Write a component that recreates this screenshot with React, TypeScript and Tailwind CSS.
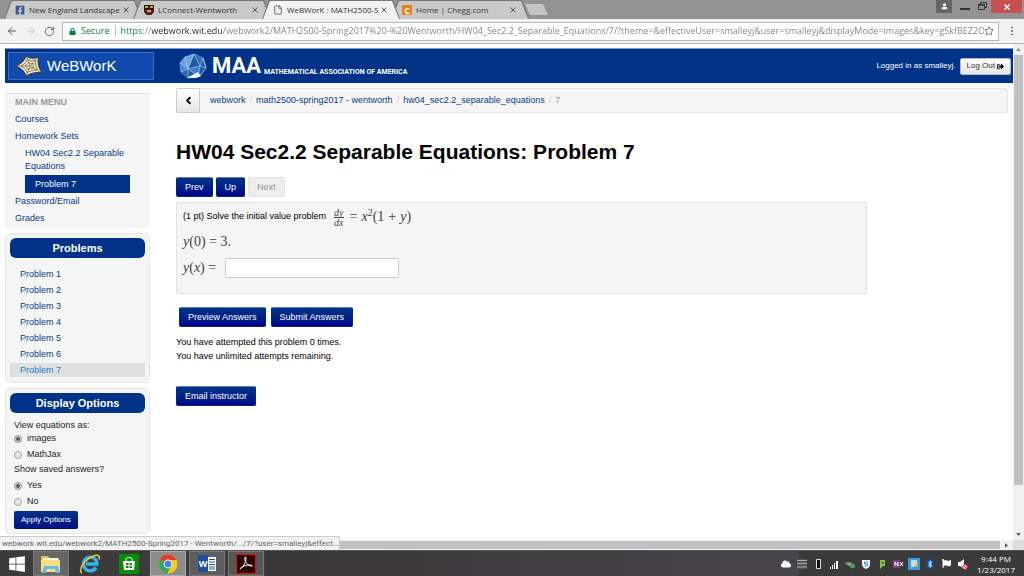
import type { ReactNode } from 'react'
import { ArrowLeft, ArrowRight, RotateCw, Star, MoreVertical, File, ChevronLeft } from 'lucide-react'
import { FaFacebookSquare, FaLock, FaSignOutAlt, FaWindows, FaBluetoothB, FaFlag, FaCloud } from 'react-icons/fa'

const PAGE_URL =
  'https://webwork.wit.edu/webwork2/MATH2500-Spring2017%20-%20Wentworth/HW04_Sec2.2_Separable_Equations/7/?theme=&effectiveUser=smalleyj&user=smalleyj&displayMode=images&key=gSkfBEZ2O'

const problems = [1, 2, 3, 4, 5, 6, 7]
const currentProblem = 7

// ---------- Browser chrome ----------

function CrestIcon() {
  return (
    <svg viewBox="0 0 10 10" className="size-[10px] shrink-0">
      <rect width="10" height="10" fill="#2a1517" />
      <path d="M0 5h10L5 10z" fill="#7d1f28" />
      <path d="M1 1h3v2H1zM6 1h3v2H6zM3 5h4v2H3z" fill="#d5a43a" />
      <path d="M0 10V7l3 3zM10 10V7l-3 3z" fill="#c8c8c8" />
    </svg>
  )
}

function CheggIcon() {
  return (
    <span className="flex size-[10px] shrink-0 items-center justify-center rounded-[1px] bg-[#e8801d] text-[9px] leading-none font-bold text-white">
      C
    </span>
  )
}

interface BrowserTabProps {
  icon: ReactNode
  title: string
  active?: boolean
}

function BrowserTab({ icon, title, active }: BrowserTabProps) {
  return (
    <div
      className={`-ml-[9px] h-full w-[138px] bg-[#777] px-px pt-px [clip-path:polygon(0_100%,7px_0,131px_0,100%_100%)] ${active ? 'relative z-10' : ''}`}
    >
      <div
        className={`flex h-full items-center gap-1 pr-3 pl-[10px] text-[8px] text-[#333] [clip-path:polygon(0_100%,7px_0,129px_0,100%_100%)] ${active ? 'bg-[#f2f2f2]' : 'bg-[#c9c9c9]'}`}
      >
        {icon}
        <span className="min-w-0 flex-1 whitespace-nowrap">{title}</span>
        <button type="button" aria-label="Close tab" className="shrink-0">
          <svg viewBox="0 0 6 6" className="size-[6px]" stroke="#555">
            <path d="M.5.5l5 5M5.5.5l-5 5" />
          </svg>
        </button>
      </div>
    </div>
  )
}

function WindowControls() {
  return (
    <div className="ml-auto flex items-start gap-2">
      <button type="button" aria-label="Profile" className="flex h-[13px] w-4 items-center justify-center bg-[#666]">
        <svg viewBox="0 0 8 8" className="size-[7px]" fill="#fff">
          <circle cx="4" cy="2" r="1.8" />
          <path d="M1 5c2-1 4-1 6 0v2H1z" />
        </svg>
      </button>
      <button type="button" aria-label="Minimize" className="flex h-[10px] w-[10px] items-end">
        <span className="h-[2px] w-full bg-[#333]" />
      </button>
      <button type="button" aria-label="Restore" className="mt-[2px]">
        <svg viewBox="0 0 9 8" className="h-2 w-[9px]" fill="none" stroke="#333">
          <path d="M2.5 2V.5h6v5H7" />
          <path d="M.5 2.5h6v5h-6z" />
          <path d="M.5 3h6" strokeWidth="1.5" />
        </svg>
      </button>
      <button type="button" aria-label="Close" className="-ml-1 flex h-[13px] w-[31px] items-center justify-center bg-[#c75050]">
        <svg viewBox="0 0 6 6" className="size-[6px]" stroke="#fff" strokeWidth="1.4">
          <path d="M.5.5l5 5M5.5.5l-5 5" />
        </svg>
      </button>
    </div>
  )
}

function TabStrip() {
  return (
    <div className="flex h-[19px] shrink-0 bg-[#939393] pr-0.5 pl-[13px]">
      <BrowserTab icon={<FaFacebookSquare className="size-[10px] shrink-0 text-[#3b5998]" />} title="New England Landscape" />
      <BrowserTab icon={<CrestIcon />} title="LConnect-Wentworth" />
      <BrowserTab icon={<File className="size-[10px] shrink-0 text-[#555]" />} title="WeBWorK : MATH2500-S" active />
      <BrowserTab icon={<CheggIcon />} title="Home | Chegg.com" />
      <button
        type="button"
        aria-label="New tab"
        className="mt-1 -ml-1 h-[11px] w-[23px] bg-[#c4c4c4] [clip-path:polygon(0_0,18px_0,100%_100%,5px_100%)]"
      />
      <WindowControls />
    </div>
  )
}

function AddressBar() {
  return (
    <div className="flex h-[25px] shrink-0 items-center gap-[7px] border-b border-[#b6b6b6] bg-[#f2f2f2] px-[6px] text-[#5a5a5a]">
      <button type="button" aria-label="Back">
        <ArrowLeft className="size-3" />
      </button>
      <button type="button" aria-label="Forward" className="text-[#c8c8c8]">
        <ArrowRight className="size-3" />
      </button>
      <button type="button" aria-label="Reload">
        <RotateCw className="size-[11px]" />
      </button>
      <div className="flex h-[19px] min-w-0 flex-1 items-center border border-[#b8b8b8] bg-white pr-1 pl-[6px]">
        <FaLock className="size-[7px] shrink-0 text-[#0b8043]" />
        <label htmlFor="address" className="ml-[5px] shrink-0 text-[9px] text-[#0b8043]">
          Secure
        </label>
        <span className="mx-[5px] h-3 w-px shrink-0 bg-[#bbb]" />
        <input
          id="address"
          type="text"
          defaultValue={PAGE_URL}
          className="min-w-0 flex-1 bg-linear-[90deg,#0b8043_22px,#808080_22px,#808080_31px,#222_31px,#222_102px,#808080_102px] bg-clip-text text-[9px] text-transparent outline-none"
        />
        <button type="button" aria-label="Bookmark">
          <Star className="size-[10px]" />
        </button>
      </div>
      <button type="button" aria-label="Menu">
        <MoreVertical className="size-3" />
      </button>
    </div>
  )
}

// ---------- WeBWorK header ----------

// five-pointed spider web
function WebworkLogo() {
  return (
    <svg viewBox="0 0 28 22" className="h-[22px] w-7" strokeLinejoin="round" fill="none">
      <path d="M1 11Q9 8 11 1Q16 5 24 2Q21 9 27 18Q19 16 11 21Q9 14 1 11z" fill="#f2e8c4" stroke="#2c2a22" strokeWidth=".9" />
      <path d="M6 11Q11 9 12 4.500Q16 7 20.500 5Q19.500 10 22.500 15Q17 14.500 12 17.500Q10.500 13 6 11z" stroke="#5b5643" strokeWidth=".7" />
      <path d="M10 11Q12.500 10 13.500 7.500Q15.500 9 18 8Q17.500 10.500 19 13Q16 12.500 13 14.500Q12.500 12 10 11z" stroke="#5b5643" strokeWidth=".6" />
      <path d="M1 11h14L11 1M15 11l9-9M15 11l12 7M15 11l-4 10" stroke="#5b5643" strokeWidth=".6" />
    </svg>
  )
}

// faceted icosahedron
function MaaLogo() {
  return (
    <svg viewBox="0 0 28 26" className="h-[26px] w-7" strokeLinejoin="round">
      <path d="M15 1l9 4 3 10-6 8-12 2-7-6-1-9 5-6z" fill="#1f5bab" stroke="#9cc3ea" strokeWidth=".8" />
      <path d="M15 1L6 4 1 10l8 6z" fill="#6ea3dc" />
      <path d="M15 1l9 4-3 8z" fill="#2f6fbd" />
      <path d="M9 16l12-3-2 10z" fill="#3d7cc6" />
      <path d="M1 10l8 6-7 3z" fill="#4a86ca" />
      <path d="M9 16L2 19l7 6z" fill="#2a66b3" />
      <path d="M8 25l11-6 3 4-5 2z" fill="#fff" />
      <path d="M15 1L9 16l12-3zM21 13l3-8 3 10zM9 16l10 7 2-10M6 4l3 12-8-6M9 16l-7 3M9 16v9" fill="none" stroke="#b9d6f2" strokeWidth=".6" />
    </svg>
  )
}

function SiteHeader() {
  return (
    <header className="flex h-[35px] items-center border-t border-[#7f9cc9] bg-[#003287] pr-[2px] pl-[3px] text-white">
      <a href="#webwork" className="flex h-7 w-[146px] items-center gap-1 border border-[#3f6cc0] bg-[#104aad] pl-[6px] text-[15px]">
        <WebworkLogo />
        WeBWorK
      </a>
      <a href="#maa" className="ml-[25px] flex items-center font-['Roboto',sans-serif] font-bold">
        <MaaLogo />
        <span className="ml-[5px] text-[22px] leading-7">MAA</span>
        <span className="mt-3 ml-[3px] text-[7px] leading-3">MATHEMATICAL ASSOCIATION OF AMERICA</span>
      </a>
      <div className="ml-auto flex items-center gap-1">
        <span className="text-[8px]">Logged in as smalleyj.</span>
        <button
          type="button"
          className="flex h-[17px] items-center gap-0.5 rounded-[2px] border border-[#bbb] bg-linear-to-b from-white to-[#e6e6e6] px-[6px] text-[8px] text-[#333]"
        >
          Log Out
          <FaSignOutAlt className="size-[7px] text-black" />
        </button>
      </div>
    </header>
  )
}

// ---------- Sidebar ----------

function MainMenu() {
  return (
    <nav className="border-t border-[#e3e3e3] bg-[#f5f5f5] pb-px pl-[10px] leading-[17px] text-[#0a3a86]">
      <h2 className="font-bold text-[#999]">MAIN MENU</h2>
      <ul>
        <li><a href="#courses">Courses</a></li>
        <li><a href="#sets">Homework Sets</a></li>
        <li className="pr-5 pl-[10px]">
          <a href="#hw04" className="block py-[2px] leading-[13px]">HW04 Sec2.2 Separable Equations</a>
          <a href="#p7" className="block bg-[#003287] pl-[10px] leading-[18px] text-white">Problem 7</a>
        </li>
        <li><a href="#password">Password/Email</a></li>
        <li><a href="#grades">Grades</a></li>
      </ul>
    </nav>
  )
}

function SidePanel({ title, children }: { title: string; children: ReactNode }) {
  return (
    <section className="mt-[5px] rounded-[5px] border border-[#e6e6e6] bg-[#f5f5f5] p-1">
      <h2 className="rounded-[6px] bg-[#003287] text-center text-[11px] leading-5 font-bold text-white">{title}</h2>
      {children}
    </section>
  )
}

interface RadioRowProps {
  name: string
  label: string
  checked?: boolean
}

function RadioRow({ name, label, checked }: RadioRowProps) {
  return (
    <label className="flex h-4 items-center gap-[5px]">
      <input
        type="radio"
        name={name}
        defaultChecked={checked}
        className="size-2 appearance-none rounded-full border border-[#a5a5a5] bg-[#e6e6e6] checked:bg-[#555] checked:shadow-[inset_0_0_0_1px_#e6e6e6]"
      />
      {label}
    </label>
  )
}

function Sidebar() {
  return (
    <aside className="mt-[10px] w-[145px] shrink-0">
      <MainMenu />
      <SidePanel title="Problems">
        <ul className="pt-2">
          {problems.map((n) => (
            <li key={n} className="flex h-4 items-center">
              <a
                href={`#problem-${n}`}
                className={`w-full pl-[10px] leading-[14px] ${n === currentProblem ? 'bg-[#e0e0e0] text-[#1a83c9]' : 'text-[#0a3a86]'}`}
              >
                Problem {n}
              </a>
            </li>
          ))}
        </ul>
      </SidePanel>
      <SidePanel title="Display Options">
        <form className="px-1 pt-[6px] text-[#222]">
          <fieldset>
            <legend className="leading-3">View equations as:</legend>
            <RadioRow name="mode" label="images" checked />
            <RadioRow name="mode" label="MathJax" />
          </fieldset>
          <fieldset className="pt-[3px]">
            <legend className="leading-3">Show saved answers?</legend>
            <RadioRow name="saved" label="Yes" checked />
            <RadioRow name="saved" label="No" />
          </fieldset>
          <button type="button" className="mt-px rounded-[2px] bg-linear-to-b from-[#003287] to-[#000f85] px-[7px] text-[8px] leading-[18px] text-white">
            Apply Options
          </button>
        </form>
      </SidePanel>
    </aside>
  )
}

// ---------- Problem ----------

function PrimaryButton({ children }: { children: ReactNode }) {
  return (
    <button
      type="button"
      className="rounded-[2px] border border-[#002a80] border-t-[#5a7bb5] bg-linear-to-b from-[#003287] to-[#000088] px-2 leading-[18px] text-white"
    >
      {children}
    </button>
  )
}

function Breadcrumb() {
  return (
    <nav className="mt-[5px] flex h-[25px] items-center gap-[4px] rounded-[2px] border border-[#e6e6e6] bg-[#f5f5f5] text-[#0a3a86]">
      <button
        type="button"
        aria-label="Back"
        className="-ml-px flex h-[25px] w-6 items-center justify-center rounded-[2px] border border-[#ccc] bg-linear-to-b from-white to-[#e6e6e6] text-black"
      >
        <ChevronLeft className="size-[11px]" strokeWidth={4} />
      </button>
      <a href="#webwork" className="ml-[6px]">webwork</a>
      <span className="text-[#ccc]">/</span>
      <a href="#course">math2500-spring2017 - wentworth</a>
      <span className="text-[#ccc]">/</span>
      <a href="#set">hw04_sec2.2_separable_equations</a>
      <span className="text-[#ccc]">/</span>
      <span className="text-[#999]">7</span>
    </nav>
  )
}

function Formula({ className, children }: { className?: string; children: ReactNode }) {
  return <span className={`font-['Liberation_Serif',serif] text-[14px] leading-5 text-[#444] ${className ?? ''}`}>{children}</span>
}

function ProblemBody() {
  return (
    <div className="mt-[5px] h-[92px] w-[83%] rounded-[2px] border border-[#e3e3e3] bg-[#f5f5f5] px-[6px] pt-[1px]">
      <div className="flex h-[26px] items-center">
        (1 pt) Solve the initial value problem
        <span className="ml-2 flex flex-col text-center font-['Liberation_Serif',serif] text-[10px] leading-[9px] text-[#444] italic">
          <span className="border-b border-[#444]">dy</span>
          <span>dx</span>
        </span>
        <Formula className="ml-[6px] flex items-center gap-1">
          <span>=</span>
          <span><i>x</i><sup className="text-[10px]">2</sup>(1</span>
          <span>+</span>
          <span><i>y</i>)</span>
        </Formula>
      </div>
      <div className="flex h-6 items-center">
        <Formula><i>y</i>(0) = 3.</Formula>
      </div>
      <div className="flex h-[27px] items-center gap-[9px]">
        <label htmlFor="answer">
          <Formula><i>y</i>(<i>x</i>) =</Formula>
        </label>
        <input id="answer" type="text" className="h-5 w-[174px] rounded-[2px] border border-[#ccc] bg-white px-1 outline-none" />
      </div>
    </div>
  )
}

function ProblemPage() {
  return (
    <main className="min-w-0 flex-1 pr-[5px]">
      <Breadcrumb />
      <h1 className="mt-[25px] text-[21px] leading-7 font-bold">HW04 Sec2.2 Separable Equations: Problem 7</h1>
      <div className="mt-[11px] flex gap-[3px]">
        <PrimaryButton>Prev</PrimaryButton>
        <PrimaryButton>Up</PrimaryButton>
        <button type="button" disabled className="rounded-[2px] border border-[#e3e3e3] bg-[#eee] px-2 leading-[18px] text-[#999]">
          Next
        </button>
      </div>
      <ProblemBody />
      <div className="mt-[13px] flex gap-[5px] pl-[3px]">
        <PrimaryButton>Preview Answers</PrimaryButton>
        <PrimaryButton>Submit Answers</PrimaryButton>
      </div>
      <p className="mt-2 mb-[23px] leading-[14px]">
        You have attempted this problem 0 times.
        <br />
        You have unlimited attempts remaining.
      </p>
      <PrimaryButton>Email instructor</PrimaryButton>
    </main>
  )
}

// ---------- Scrollbars and status bubble ----------

function VerticalScrollbar() {
  return (
    <div className="flex w-[11px] shrink-0 flex-col items-center bg-[#f1f1f1] py-1">
      <svg viewBox="0 0 6 4" className="h-[3px] w-[5px]" fill="#888"><path d="M0 4l3-4 3 4z" /></svg>
      <div className="mt-1 mb-12 w-[9px] flex-1 bg-[#c1c1c1]" />
      <svg viewBox="0 0 6 4" className="h-[3px] w-[5px]" fill="#555"><path d="M0 0l3 4 3-4z" /></svg>
    </div>
  )
}

function HorizontalScrollbar() {
  return (
    <div className="relative flex h-[10px] shrink-0 items-center bg-[#f1f1f1] pl-3">
      <div className="h-2 flex-1 bg-[#c1c1c1]" />
      <svg viewBox="0 0 4 6" className="mx-[5px] h-[5px] w-[3px]" fill="#555"><path d="M0 0l4 3-4 3z" /></svg>
      <div className="h-full w-[11px] bg-[#dcdcdc]" />
      <div className="absolute bottom-0 left-0 h-[14px] w-[340px] rounded-tr-[2px] border-t border-r border-[#ccc] bg-[#f2f2f2] pl-[2px] font-['Roboto',sans-serif] text-[8px] leading-[14px] whitespace-nowrap text-[#666]">
        webwork.wit.edu/webwork2/MATH2500-Spring2017 - Wentworth/.../7/?user=smalleyj&amp;effect...
      </div>
    </div>
  )
}

// ---------- Windows taskbar ----------

function FolderIcon() {
  return (
    <svg viewBox="0 0 22 20" className="h-5 w-[22px]">
      <path d="M1 2h7l2 2h9v14H1z" fill="#e3bd5b" />
      <path d="M3 4h15v4H3z" fill="#fdf6d6" />
      <path d="M1 6h19v12H1z" fill="#f6dd88" />
      <path d="M4 12h14l2 7h-4l-1-4H7l-1 4H2z" fill="#6cb7e0" />
    </svg>
  )
}

function ExplorerIcon() {
  return (
    <svg viewBox="0 0 22 20" className="h-5 w-[22px]" fill="none">
      <path d="M17 13.5A6.8 6.8 0 1 1 18 10H7" stroke="#35b1ec" strokeWidth="3.4" />
      <path d="M3 19C-2 16 7 4 16 1.500c4-1 5 1 4 4" stroke="#f5c32c" strokeWidth="1.5" />
    </svg>
  )
}

function StoreIcon() {
  return (
    <svg viewBox="0 0 20 20" className="size-5">
      <rect width="20" height="20" fill="#0a8a0a" />
      <path d="M7 7V5c0-2 6-2 6 0v2" fill="none" stroke="#fff" />
      <path d="M4 7h12l-1 9H5z" fill="#fff" />
      <path d="M7 9h2.500v2H7zM10.500 9H13v2h-2.500zM7 12h2.500v2H7zM10.500 12H13v2h-2.500z" fill="#0a8a0a" />
    </svg>
  )
}

function ChromeIcon() {
  return (
    <svg viewBox="0 0 20 20" className="size-5">
      <circle cx="10" cy="10" r="9.500" fill="#fbc916" />
      <path d="M10 10L1.800 5.200A9.500 9.500 0 0 1 18.500 6H10z" fill="#e23b2e" />
      <path d="M10 10L1.800 5.200A9.500 9.500 0 0 0 9.500 19.500L13 12z" fill="#3aa757" />
      <circle cx="10" cy="10" r="4.400" fill="#fff" />
      <circle cx="10" cy="10" r="3.500" fill="#4285f4" />
    </svg>
  )
}

function WordIcon() {
  return (
    <span className="flex items-center">
      <span className="flex h-[17px] w-[10px] items-center justify-center bg-[#1e4e9c] text-[9px] font-bold text-white">W</span>
      <svg viewBox="0 0 8 14" className="h-[14px] w-2">
        <path d="M0 0h8v14H0z" fill="#fff" />
        <path d="M1 2.500h6M1 5h6M1 7.500h6M1 10h6M1 12h6" stroke="#2b579a" />
      </svg>
    </span>
  )
}

function AcrobatIcon() {
  return (
    <svg viewBox="0 0 20 20" className="size-5">
      <rect x=".5" y=".5" width="19" height="19" fill="#2b0504" stroke="#d8150f" />
      <path d="M4 15c4-3 6-7 6-11 0-2-2-1-1 2 1 4 4 6 7 6 1 0 0-1-3-1-4 0-9 3-9 4z" fill="none" stroke="#fff" />
    </svg>
  )
}

function TaskButton({ label, className, children }: { label: string; className: string; children: ReactNode }) {
  return (
    <button type="button" aria-label={label} className={`flex h-full items-center justify-center ${className}`}>
      {children}
    </button>
  )
}

function SystemTray() {
  return (
    <div className="ml-auto grid auto-cols-[16px] grid-flow-col place-items-center text-white">
      <FaCloud className="size-[10px]" />
      <svg viewBox="0 0 12 12" className="size-3">
        <path d="M1 1h10v10H1z" fill="#555" />
        <path d="M1 2.500h10M1 5.500h10M1 9h10" stroke="#aaa" />
      </svg>
      <svg viewBox="0 0 12 12" className="size-3" fill="#111" stroke="#ddd">
        <path d="M4.500 1.500h4v9h-4z" />
      </svg>
      <svg viewBox="0 0 12 12" className="size-3" fill="#fff">
        <path d="M2 9h1v2H2zM4 7h1v4H4zM6 5h1v6H6zM8 3h2v8H8z" />
      </svg>
      <svg viewBox="0 0 12 12" className="size-3">
        <path d="M1 5l5-1 3 3-4 1z" fill="#999" />
        <circle cx="8.500" cy="8" r="2.500" fill="#3ba54a" />
      </svg>
      <svg viewBox="0 0 12 12" className="size-3">
        <path d="M2 2h8v4c0 3-2 4-4 5-2-1-4-2-4-5z" fill="#fff" />
        <path d="M8 4H4.500v2H8c0 2-1 2-3.500 2" fill="none" stroke="#1c86d1" />
      </svg>
      <svg viewBox="0 0 12 12" className="size-3">
        <path d="M4 2h5v6H7l-3 3z" fill="#86c440" />
        <path d="M6 4h1.500v2H6z" fill="#245c12" />
      </svg>
      <svg viewBox="0 0 12 12" className="size-3">
        <path d="M1 2h7v8H1z" fill="#80397b" />
        <path d="M3 8V4l3 4V4M8 4l3 4M11 4L8 8" fill="none" stroke="#fff" />
      </svg>
      <svg viewBox="0 0 12 12" className="size-3">
        <path d="M0 0h12v12H0z" fill="#3e98dc" />
        <path d="M3 2h6v7H3z" fill="#bfe0f7" />
        <path d="M6 9l4-5v5z" fill="#d1b13b" />
      </svg>
      <span className="flex h-[10px] w-2 items-center justify-center rounded-full bg-[#0a4fa0]">
        <FaBluetoothB className="size-2" />
      </span>
      <FaFlag className="size-[9px]" />
      <svg viewBox="0 0 12 12" className="size-3">
        <path d="M2 4h2l4-3v10L4 8H2z" fill="#fff" />
        <circle cx="9" cy="9" r="2.300" fill="#fff" stroke="#d22" />
        <path d="M7.500 7.500l3 3" stroke="#d22" />
      </svg>
    </div>
  )
}

function Taskbar() {
  return (
    <footer className="flex h-[26px] shrink-0 items-center border-t border-[#555] bg-linear-[90deg,#3b3b3b_26%,#393637_26%,#48464b_78%,#3a3a3a_78%] font-['Open_Sans',sans-serif]">
      <TaskButton label="Start" className="w-[33px]"><FaWindows className="size-[18px] text-white" /></TaskButton>
      <TaskButton label="File Explorer" className="w-9 border border-[#777] bg-[#666]"><FolderIcon /></TaskButton>
      <TaskButton label="Internet Explorer" className="w-[42px]"><ExplorerIcon /></TaskButton>
      <TaskButton label="Store" className="w-9"><StoreIcon /></TaskButton>
      <TaskButton label="Chrome" className="ml-[3px] w-9 border border-[#aaa] bg-[#8c8c8c]"><ChromeIcon /></TaskButton>
      <TaskButton label="Word" className="ml-[3px] w-9 border border-[#777] bg-[#5e5e5e]"><WordIcon /></TaskButton>
      <TaskButton label="Acrobat" className="ml-[3px] w-9 border border-[#777] bg-[#5a5555]"><AcrobatIcon /></TaskButton>
      <SystemTray />
      <div className="mr-[9px] ml-[7px] text-center text-[8px] leading-[11px] text-white">
        9:44 PM
        <br />
        1/23/2017
      </div>
    </footer>
  )
}

export default function App() {
  return (
    <div className="flex h-screen flex-col overflow-hidden bg-white font-['Liberation_Sans',Arial,sans-serif] text-[9px] text-black">
      <div className="font-['Open_Sans',sans-serif]">
        <TabStrip />
        <AddressBar />
      </div>
      <div className="flex min-h-0 flex-1">
        <div className="min-w-0 flex-1 overflow-hidden pt-1 pl-[5px]">
          <SiteHeader />
          <div className="flex gap-[26px]">
            <Sidebar />
            <ProblemPage />
          </div>
        </div>
        <VerticalScrollbar />
      </div>
      <HorizontalScrollbar />
      <Taskbar />
    </div>
  )
}
